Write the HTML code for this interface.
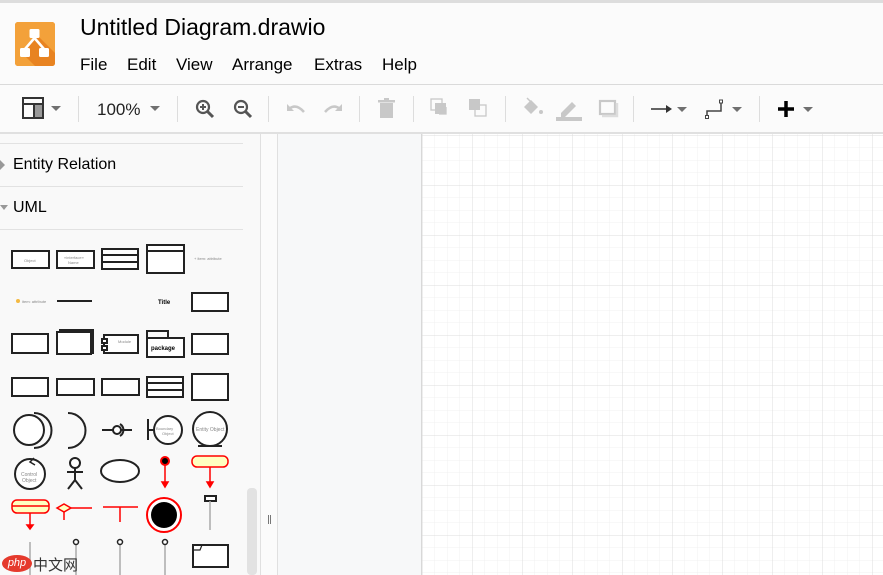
<!DOCTYPE html>
<html><head><meta charset="utf-8"><style>
*{margin:0;padding:0;box-sizing:border-box}
body{width:883px;height:575px;overflow:hidden;background:#fbfbfb;font-family:"Liberation Sans",Arial,sans-serif;position:relative;color:#000}
.abs{position:absolute}
.menu span{position:absolute;top:55px;font-size:17px}
.sep{position:absolute;top:96px;width:1px;height:26px;background:#ddd}
.dd{position:absolute;width:0;height:0;border-left:5px solid transparent;border-right:5px solid transparent;border-top:5px solid #707070}
.dd.l{border-top-color:#c8c8c8}
</style></head><body>
<div class="abs" style="left:0;top:0;width:883px;height:3px;background:#ddd"></div>
<div class="abs" style="left:0;top:3px;width:883px;height:81px;background:#fbfbfb"></div>
<!-- logo -->
<svg class="abs" style="left:15px;top:22px" width="41" height="45" viewBox="0 0 41 45">
<rect x="0" y="0" width="40" height="44" rx="3" fill="#f08705"/>
<rect x="0" y="0" width="40" height="44" rx="3" fill="#f3a13a"/>
<path d="M22 13 L40 31 L40 41 Q40 44 37 44 L20 44 L8 32 Z" fill="#df6c0c" opacity=".55"/>
<rect x="14.5" y="7" width="10" height="9" rx="1.5" fill="#fff"/>
<path d="M19.5 16 L10 27 M19.5 16 L29 27" stroke="#fff" stroke-width="2.5" fill="none"/>
<rect x="5" y="26" width="10" height="9" rx="1.5" fill="#fff"/>
<rect x="24" y="26" width="10" height="9" rx="1.5" fill="#fff"/>
</svg>
<div class="abs" style="left:80px;top:14px;font-size:23px">Untitled Diagram.drawio</div>
<div class="menu">
<span style="left:80px">File</span><span style="left:127px">Edit</span><span style="left:176px">View</span><span style="left:232px">Arrange</span><span style="left:314px">Extras</span><span style="left:382px">Help</span>
</div>
<div class="abs" style="left:0;top:84px;width:883px;height:1px;background:#dadada"></div>
<!-- toolbar -->
<svg class="abs" style="left:22px;top:97px" width="24" height="24" viewBox="0 0 24 24"><rect x="1" y="1" width="20" height="20" fill="none" stroke="#333" stroke-width="2"/><line x1="1" y1="7" x2="21" y2="7" stroke="#333" stroke-width="2"/><rect x="13" y="8" width="7" height="12" fill="#999"/><line x1="12" y1="7" x2="12" y2="21" stroke="#333" stroke-width="2"/></svg>
<div class="dd" style="left:51px;top:106px"></div>
<div class="sep" style="left:78px"></div>
<div class="abs" style="left:97px;top:100px;font-size:17px;color:#222">100%</div>
<div class="dd" style="left:150px;top:106px"></div>
<div class="sep" style="left:177px"></div>
<svg class="abs" style="left:194px;top:98px" width="24" height="24" viewBox="0 0 24 24"><circle cx="9" cy="9" r="6" fill="none" stroke="#555" stroke-width="2.2"/><path d="M13 13 L19 19" stroke="#555" stroke-width="3"/><path d="M6 9h6M9 6v6" stroke="#555" stroke-width="2"/></svg>
<svg class="abs" style="left:232px;top:98px" width="24" height="24" viewBox="0 0 24 24"><circle cx="9" cy="9" r="6" fill="none" stroke="#555" stroke-width="2.2"/><path d="M13 13 L19 19" stroke="#555" stroke-width="3"/><path d="M6 9h6" stroke="#555" stroke-width="2"/></svg>
<div class="sep" style="left:268px"></div>
<svg class="abs" style="left:285px;top:100px" width="22" height="18" viewBox="0 0 22 18"><path d="M4 9 Q11 3 19 12" fill="none" stroke="#c8c8c8" stroke-width="2.5"/><path d="M2 4 L2 11 L9 11 Z" fill="#c8c8c8"/></svg>
<svg class="abs" style="left:322px;top:100px" width="22" height="18" viewBox="0 0 22 18"><path d="M18 9 Q11 3 3 12" fill="none" stroke="#c8c8c8" stroke-width="2.5"/><path d="M20 4 L20 11 L13 11 Z" fill="#c8c8c8"/></svg>
<div class="sep" style="left:359px"></div>
<svg class="abs" style="left:377px;top:98px" width="20" height="22" viewBox="0 0 20 22"><rect x="3" y="5" width="13" height="15" fill="#c8c8c8"/><rect x="1" y="2" width="17" height="2.5" fill="#c8c8c8"/><rect x="7" y="0" width="5" height="2" fill="#c8c8c8"/></svg>
<div class="sep" style="left:413px"></div>
<svg class="abs" style="left:430px;top:98px" width="22" height="22" viewBox="0 0 22 22"><rect x="1" y="1" width="11" height="11" fill="none" stroke="#c8c8c8" stroke-width="1.3"/><rect x="5" y="5" width="11" height="11" fill="#c8c8c8"/><path d="M16 9 V16 H9" fill="none" stroke="#c8c8c8" stroke-width="1.3"/></svg>
<svg class="abs" style="left:468px;top:98px" width="22" height="22" viewBox="0 0 22 22"><rect x="1" y="1" width="11" height="11" fill="#c8c8c8"/><rect x="7" y="7" width="11" height="11" fill="#fbfbfb" stroke="#c8c8c8" stroke-width="1.3"/><rect x="7" y="7" width="5" height="5" fill="#c8c8c8"/></svg>
<div class="sep" style="left:505px"></div>
<svg class="abs" style="left:521px;top:96px" width="24" height="22" viewBox="0 0 24 22"><path d="M3 11 L10 4 L17 11 L10 18 Z" fill="#c8c8c8"/><path d="M6 2 L10 6" stroke="#c8c8c8" stroke-width="1.5"/><circle cx="20" cy="16" r="2" fill="#c8c8c8"/></svg>
<svg class="abs" style="left:555px;top:96px" width="28" height="26" viewBox="0 0 28 26"><path d="M6 17 L17 6 L21 10 L10 21 H6 Z" fill="#c8c8c8"/><rect x="1" y="21" width="26" height="4" fill="#c8c8c8"/></svg>
<svg class="abs" style="left:597px;top:98px" width="22" height="22" viewBox="0 0 22 22"><rect x="3" y="3" width="15" height="13" fill="none" stroke="#c8c8c8" stroke-width="2.2"/><path d="M5 18 H20 V5" fill="none" stroke="#ddd" stroke-width="2.5"/></svg>
<div class="sep" style="left:633px"></div>
<svg class="abs" style="left:650px;top:103px" width="24" height="12" viewBox="0 0 24 12"><path d="M1 6 H18" stroke="#333" stroke-width="1.5"/><path d="M16 2 L22 6 L16 10 Z" fill="#333"/></svg>
<div class="dd" style="left:677px;top:107px"></div>
<svg class="abs" style="left:705px;top:99px" width="24" height="22" viewBox="0 0 24 22"><path d="M2 18 V12 H16 V3" fill="none" stroke="#444" stroke-width="1.5"/><rect x="0.5" y="16.5" width="3" height="3" fill="#fff" stroke="#444"/><rect x="14.5" y="1" width="3" height="3" fill="#fff" stroke="#444"/></svg>
<div class="dd" style="left:732px;top:107px"></div>
<div class="sep" style="left:759px"></div>
<svg class="abs" style="left:777px;top:100px" width="18" height="18" viewBox="0 0 18 18"><path d="M9 1 V17 M1 9 H17" stroke="#000" stroke-width="3.5"/></svg>
<div class="dd" style="left:803px;top:107px"></div>
<div class="abs" style="left:0;top:132px;width:883px;height:2px;background:#e0e0e0"></div>
<!-- sidebar -->
<div class="abs" style="left:0;top:134px;width:260px;height:441px;background:#f9f9f9"></div>
<div class="abs" style="left:0;top:143px;width:243px;height:1px;background:#e2e2e2"></div>
<div class="abs" style="left:0;top:186px;width:243px;height:1px;background:#e2e2e2"></div>
<div class="abs" style="left:0;top:229px;width:243px;height:1px;background:#e2e2e2"></div>
<div class="abs" style="left:0;top:160px;width:0;height:0;border-top:5px solid transparent;border-bottom:5px solid transparent;border-left:5px solid #999"></div>
<div class="abs" style="left:13px;top:156px;font-size:16px">Entity Relation</div>
<div class="abs" style="left:0;top:205px;width:0;height:0;border-left:4px solid transparent;border-right:4px solid transparent;border-top:5px solid #999"></div>
<div class="abs" style="left:13px;top:199px;font-size:16px">UML</div>
<div class="abs" style="left:247px;top:488px;width:10px;height:87px;background:#e2e2e2;border-radius:4px"></div>
<div class="abs" style="left:260px;top:134px;width:1px;height:441px;background:#e0e0e0"></div>
<div class="abs" style="left:261px;top:134px;width:16px;height:441px;background:#fbfbfb"></div>
<div class="abs" style="left:268px;top:515px;width:1px;height:9px;background:#777"></div>
<div class="abs" style="left:270px;top:515px;width:1px;height:9px;background:#777"></div>
<div class="abs" style="left:277px;top:134px;width:1px;height:441px;background:#e0e0e0"></div>
<div class="abs" style="left:278px;top:134px;width:605px;height:441px;background:#f7f8f9"></div>
<!-- shapes -->
<svg class="abs" style="left:0;top:230px" width="260" height="345" viewBox="0 0 260 345" font-family="Liberation Sans,sans-serif">
<g fill="#fff" stroke="#222" stroke-width="2">
<rect x="12" y="21" width="37" height="17"/>
<rect x="57" y="21" width="37" height="17"/>
<rect x="102" y="19" width="36" height="20"/><line x1="102" y1="25" x2="138" y2="25"/><line x1="102" y1="32" x2="138" y2="32"/>
<rect x="147" y="15" width="37" height="28"/><line x1="147" y1="21" x2="184" y2="21"/>
<line x1="57" y1="71" x2="92" y2="71"/>
<rect x="192" y="63" width="36" height="18"/>
<rect x="12" y="104" width="36" height="19"/>
<rect x="57" y="102" width="34" height="22"/><path d="M59 100 H93 V124" fill="none"/>
<rect x="104" y="105" width="34" height="18"/><rect x="102" y="109" width="5" height="4"/><rect x="102" y="116" width="5" height="4"/>
<rect x="147" y="108" width="37" height="19"/><path d="M147 108 V101 H168 V108" fill="none"/>
<rect x="192" y="104" width="36" height="20"/>
<rect x="12" y="148" width="36" height="18"/>
<rect x="57" y="149" width="37" height="16"/>
<rect x="102" y="149" width="37" height="16"/>
<rect x="147" y="147" width="36" height="20"/><line x1="147" y1="153" x2="183" y2="153"/><line x1="147" y1="160" x2="183" y2="160"/>
<rect x="192" y="144" width="36" height="26"/>
<circle cx="29" cy="200" r="15"/><path d="M34 183 A17 17 0 0 1 34 218" fill="none"/>
<path d="M68 183 A17 17 0 0 1 68 218" fill="none"/>
<line x1="102" y1="200" x2="132" y2="200"/><circle cx="117" cy="200" r="4"/><path d="M120 194 A7 7 0 0 1 120 206" fill="none"/>
<line x1="148" y1="189" x2="148" y2="210"/><line x1="148" y1="200" x2="154" y2="200"/><circle cx="168" cy="200" r="14"/>
<circle cx="210" cy="199" r="17"/><line x1="198" y1="216" x2="222" y2="216"/>
<circle cx="30" cy="244" r="15"/>
<circle cx="75" cy="233" r="5"/><path d="M75 238 V250 M67 242 H83 M75 250 L68 259 M75 250 L82 259" fill="none"/>
<ellipse cx="120" cy="241" rx="19" ry="11"/>
<rect x="147" y="268" width="34" height="34" rx="17" fill="#fff" stroke="#f00" stroke-width="2"/>
<circle cx="164" cy="285" r="13" fill="#000" stroke="none"/>
<rect x="205" y="266" width="11" height="5"/>
<rect x="193" y="315" width="35" height="22"/><path d="M193 320 H200 L202 315" fill="none" stroke-width="1.2"/>
</g>
<g fill="#888" font-size="4"><text x="24" y="32">Object</text><text x="64" y="29">«interface»</text><text x="68" y="34">Name</text><text x="194" y="30">+ item: attribute</text><text x="22" y="73">item: attribute</text><text x="118" y="113">Module</text><text x="156" y="200">Boundary</text><text x="162" y="205">Object</text><text x="196" y="201" font-size="5">Entity Object</text><text x="21" y="246" font-size="5">Control</text><text x="22" y="252" font-size="5">Object</text></g>
<text x="158" y="74" font-size="6" font-weight="bold">Title</text>
<text x="151" y="120" font-size="6" font-weight="bold">package</text>
<circle cx="18" cy="71" r="2" fill="#f4b942"/>
<path d="M34 228 L30 232 L35 235" fill="none" stroke="#222" stroke-width="1.5"/>
<g stroke="#f00" stroke-width="1.5" fill="#f00">
<circle cx="165" cy="231" r="4" fill="#000" stroke-width="2"/><line x1="165" y1="235" x2="165" y2="253"/><path d="M162 252 L165 257 L168 252Z"/>
<rect x="192" y="226" width="36" height="11" rx="5" fill="#ffffc0"/><line x1="210" y1="237" x2="210" y2="253"/><path d="M207 252 L210 257 L213 252Z"/>
<rect x="12" y="270" width="37" height="13" rx="5" fill="#ffffc0"/><line x1="12" y1="276" x2="49" y2="276"/><line x1="30" y1="283" x2="30" y2="296"/><path d="M27 295 L30 299 L33 295Z"/>
<path d="M57 278 L64 274 L71 278 L64 282 Z" fill="#ffffc0"/><line x1="71" y1="278" x2="92" y2="278"/><line x1="64" y1="282" x2="64" y2="290"/>
<line x1="103" y1="277" x2="138" y2="277"/><line x1="120" y1="277" x2="120" y2="292"/>
</g>
<g stroke="#aaa" stroke-width="1.5"><line x1="210" y1="271" x2="210" y2="300"/><line x1="30" y1="312" x2="30" y2="345"/><line x1="76" y1="315" x2="76" y2="345"/><line x1="120" y1="315" x2="120" y2="345"/><line x1="165" y1="315" x2="165" y2="345"/></g>
<g fill="#fff" stroke="#222" stroke-width="1.5"><circle cx="76" cy="312" r="2.5"/><circle cx="120" cy="312" r="2.5"/><circle cx="165" cy="312" r="2.5"/></g>
</svg>
<!-- watermark -->
<div class="abs" style="left:2px;top:555px;width:30px;height:17px;background:#e53a2d;border-radius:50%;color:#fff;font-size:11px;text-align:center;line-height:17px;font-style:italic">php</div>
<div class="abs" style="left:33px;top:554px;font-size:15px;color:#333;font-family:'Liberation Sans','Noto Sans CJK SC',sans-serif">中文网</div>
<!-- page grid -->
<svg class="abs" style="left:421px;top:134px" width="462" height="441">
<defs>
<pattern id="mi" x="1" y="1" width="12.5" height="12.5" patternUnits="userSpaceOnUse"><path d="M0 0 H12.5 M0 0 V12.5" stroke="#f0f0f0" stroke-width="1" fill="none"/></pattern>
<pattern id="ma" x="1" y="1" width="50" height="50" patternUnits="userSpaceOnUse"><path d="M0 0 H50 M0 0 V50" stroke="#dcdcdc" stroke-width="1" fill="none"/></pattern>
</defs>
<rect width="462" height="441" fill="#fff"/>
<rect width="462" height="441" fill="url(#mi)"/>
<rect width="462" height="441" fill="url(#ma)"/>
<line x1="0.5" y1="0" x2="0.5" y2="441" stroke="#d8d8d8"/>
</svg>
</body></html>
